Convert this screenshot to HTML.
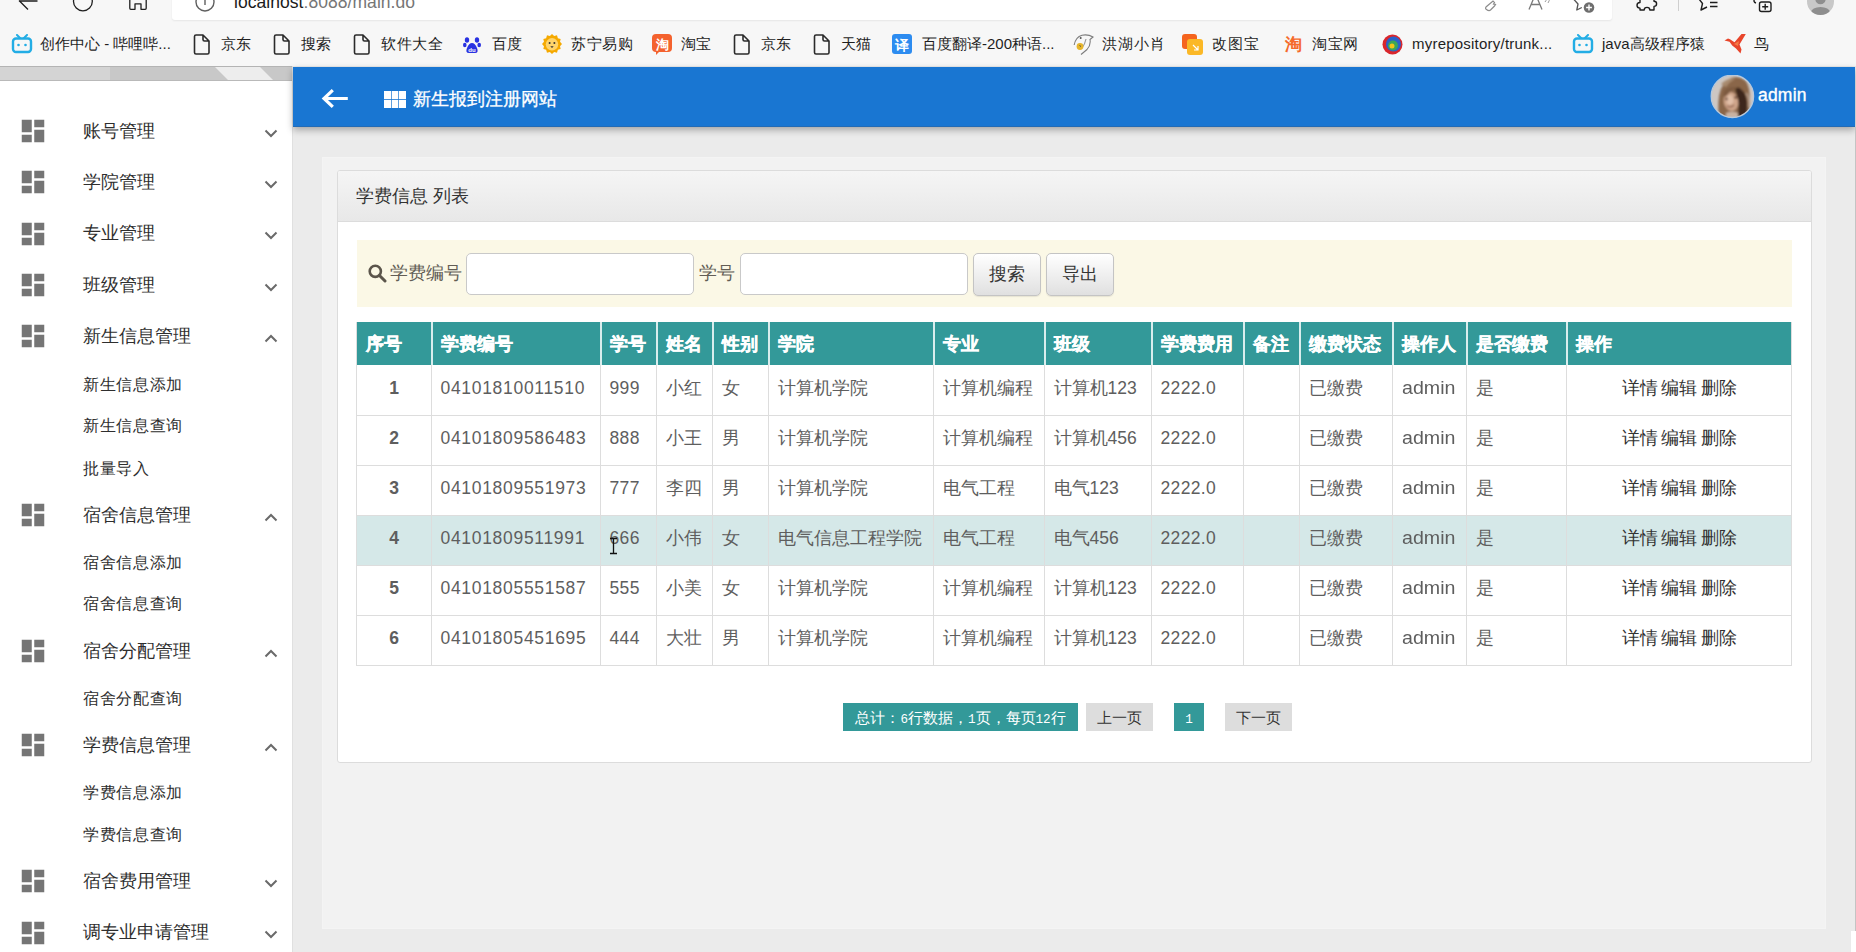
<!DOCTYPE html>
<html><head><meta charset="utf-8"><style>
*{box-sizing:border-box;margin:0;padding:0}
html,body{width:1856px;height:952px;overflow:hidden;background:#f7f7f7;font-family:"Liberation Sans",sans-serif;}
.a{position:absolute}
.t{position:absolute;white-space:nowrap;line-height:40px;height:40px}
#addr{left:172px;top:-10px;width:1440px;height:30px;background:#fff;border-radius:0 0 3px 3px;box-shadow:0 1px 2px rgba(0,0,0,.07)}
.bm{position:absolute;top:23.6px;height:40px;line-height:40px;font-size:15px;color:#1f1f1f;white-space:nowrap}
.bi{position:absolute}
#sbtop{left:0;top:66px;width:292px;height:15px;background:#c8c8c8;border-top:1px solid #b4b4b4;border-bottom:1px solid #b9b9b9;overflow:hidden}
#side{left:0;top:81px;width:292px;height:871px;background:#fff}
#sideline{left:291.5px;top:66px;width:1.5px;height:886px;background:#e0e0e0}
#main{left:293px;top:66px;width:1563px;height:886px;background:#ebebeb}
#hdr{left:293px;top:67px;width:1562px;height:60px;background:#1976d2;border-bottom:1px solid #236bb5;box-shadow:0 3px 7px rgba(0,0,0,.3)}
.mi{position:absolute;left:83px;font-size:17.5px;color:#2e2e2e;line-height:40px;height:40px;white-space:nowrap}
.si{position:absolute;left:83px;letter-spacing:0.7px;font-size:16px;color:#2e2e2e;line-height:40px;height:40px;white-space:nowrap}
.ic{position:absolute;left:22px;width:22px;height:22px}
.chev{position:absolute;left:264px;width:14px;height:9px}
#outer{left:322px;top:157px;width:1504px;height:772px;background:#f2f2f2;border:1px solid #f4f4f4}
#panel{left:337px;top:170px;width:1475px;height:593px;background:#fff;border:1px solid #dcdcdc;border-radius:3px;overflow:hidden}
#ph{left:0;top:0;width:1473px;height:51px;background:linear-gradient(#f5f5f5,#e8e8e8);border-bottom:1px solid #dcdcdc}
#search{left:357px;top:240px;width:1435px;height:67px;background:#fbf8e6}
.inp{position:absolute;top:253px;height:42px;width:228px;background:#fff;border:1px solid #c9c9c9;border-radius:5px}
.btn{position:absolute;top:253px;height:43px;width:68px;background:linear-gradient(#fff,#e0e0e0);border:1px solid #c4c4c4;border-radius:5px;box-shadow:0 1px 1px rgba(0,0,0,.08);font-size:17.5px;color:#333;text-align:center;line-height:41px}
.vl{position:absolute;width:1px;background:#dddddd}
.hl{position:absolute;height:1px;background:#dddddd}
.th{position:absolute;font-size:17.5px;font-weight:bold;color:#fff;-webkit-text-stroke:0.4px #fff;line-height:40px;height:40px;white-space:nowrap}
.td{position:absolute;font-size:17.5px;color:#5e5e5e;line-height:40px;height:40px;white-space:nowrap}
.mn{font-family:"Liberation Mono",monospace;font-size:12.6px}
.pg{position:absolute;top:703px;height:28px;line-height:30px;font-size:15px;text-align:center;white-space:nowrap}
</style></head><body>
<div id="addr" class="a"></div>
<svg class="a" style="left:0;top:0" width="170" height="16" fill="none" stroke="#1f1f1f" stroke-width="1.3"><path d="M37.5 1 H19 M19 0.5 L28 9.5"/><circle cx="82.9" cy="1.4" r="9.4"/><path d="M129.8 -2 V8.3 q0 1 1 1 h4.2 V3.8 h6 V9.3 h4.2 q1 0 1 -1 V-2" stroke-linejoin="round"/></svg>
<svg class="a" style="left:193px;top:-9px" width="24" height="30"><circle cx="12" cy="11" r="9" fill="none" stroke="#5f5f5f" stroke-width="1.4"/><line x1="12" y1="8" x2="12" y2="14" stroke="#5f5f5f" stroke-width="1.4"/></svg>
<div class="a" style="left:234px;top:-10px;line-height:24px;font-size:17.5px;letter-spacing:0.05px;color:#1b1b1b;white-space:nowrap">localhost<span style="color:#767676">:8088/main.do</span></div>
<svg class="a" style="left:0;top:0" width="1856" height="22" fill="none"><path d="M1486.5 9.5 q-1.5 -1 -0.5 -2.5 l7 -6 l1.5 1.5 l-1 1.5 l2 0.5 l-1 1.5 l-4 4 q-1.5 1.3 -4 -0.5z M1494 -1 q4 -4 8 -1" stroke="#8c8c8c" stroke-width="1.2"/><path d="M1529 9.5 L1535.5 -6 L1542 9.5 M1531.2 4.5 h8.6" stroke="#7a7a7a" stroke-width="1.3"/><path d="M1545 -1 q2 1.5 0 3 M1548 -2 q2.5 2.5 0 5" stroke="#9a9a9a" stroke-width="1"/><path d="M1573.5 -1 l4.5 5 l-1.2 6 l5 -2.5" stroke="#555" stroke-width="1.3" stroke-linejoin="round"/><circle cx="1589" cy="7.5" r="5.3" fill="#6e6e6e"/><path d="M1589 4.6v5.8M1586.1 7.5h5.8" stroke="#fff" stroke-width="1.4"/><path d="M1640 -1 v3.5 q-3 0 -3 2.8 q0 2.8 3 2.8 v1.9 h4.2 q0 -2.6 2.8 -2.6 q2.8 0 2.8 2.6 h4.2 v-3.6 q2.6 0 2.6 -2.6 q0 -2.6 -2.6 -2.6 v-2" stroke="#1e1e1e" stroke-width="1.4" stroke-linejoin="round"/><line x1="1678.5" y1="0" x2="1678.5" y2="11" stroke="#cfcfcf" stroke-width="1"/><path d="M1699 -1 l3.5 4.5 l-1.5 6.5 l6 -3" stroke="#1e1e1e" stroke-width="1.4" stroke-linejoin="round"/><path d="M1710 2.5h7.5M1710 6.5h7.5" stroke="#1e1e1e" stroke-width="1.4"/><path d="M1754.5 -1 q-1.5 3 1.5 4" stroke="#1e1e1e" stroke-width="1.4"/><rect x="1759.5" y="2" width="11.5" height="9.5" rx="2" stroke="#1e1e1e" stroke-width="1.4"/><path d="M1765.2 3.8v6M1762.2 6.8h6" stroke="#1e1e1e" stroke-width="1.4"/></svg>
<svg class="a" style="left:1806px;top:0" width="30" height="18"><defs><clipPath id="pc"><circle cx="14.5" cy="1.5" r="13.5"/></clipPath></defs><circle cx="14.5" cy="1.5" r="13.5" fill="#c8c8c8"/><g clip-path="url(#pc)" fill="#8e8e8e"><circle cx="14.5" cy="-1" r="5.2"/><ellipse cx="14.5" cy="12.5" rx="9.5" ry="5.5"/></g></svg>
<svg class="bi" style="left:11px;top:34px" width="22" height="20"><path d="M6 1 l3 3 M16 1 l-3 3" stroke="#23ade5" stroke-width="2" stroke-linecap="round"/><rect x="2" y="4.5" width="18" height="13.5" rx="3" fill="none" stroke="#23ade5" stroke-width="2.4"/><circle cx="7.5" cy="11" r="1.3" fill="#23ade5"/><circle cx="14.5" cy="11" r="1.3" fill="#23ade5"/></svg>
<div class="bm" style="left:40px;letter-spacing:0.00px">创作中心 - 哔哩哔...</div>
<svg class="bi" style="left:193px;top:34px" width="18" height="21" fill="none" stroke="#2b2b2b" stroke-width="1.6" stroke-linejoin="round"><path d="M1.5 2.5 q0 -1.5 1.5 -1.5 h7 l6 6 v11.5 q0 1.5 -1.5 1.5 h-11.5 q-1.5 0 -1.5 -1.5z M10 1 v4.5 q0 1.5 1.5 1.5 h4.5"/></svg>
<div class="bm" style="left:221px;letter-spacing:0.00px">京东</div>
<svg class="bi" style="left:273px;top:34px" width="18" height="21" fill="none" stroke="#2b2b2b" stroke-width="1.6" stroke-linejoin="round"><path d="M1.5 2.5 q0 -1.5 1.5 -1.5 h7 l6 6 v11.5 q0 1.5 -1.5 1.5 h-11.5 q-1.5 0 -1.5 -1.5z M10 1 v4.5 q0 1.5 1.5 1.5 h4.5"/></svg>
<div class="bm" style="left:301px;letter-spacing:0.00px">搜索</div>
<svg class="bi" style="left:353px;top:34px" width="18" height="21" fill="none" stroke="#2b2b2b" stroke-width="1.6" stroke-linejoin="round"><path d="M1.5 2.5 q0 -1.5 1.5 -1.5 h7 l6 6 v11.5 q0 1.5 -1.5 1.5 h-11.5 q-1.5 0 -1.5 -1.5z M10 1 v4.5 q0 1.5 1.5 1.5 h4.5"/></svg>
<div class="bm" style="left:381px;letter-spacing:0.60px">软件大全</div>
<svg class="bi" style="left:463px;top:34px" width="18" height="20" fill="#2932e1"><ellipse cx="4" cy="6" rx="2.2" ry="2.8"/><ellipse cx="14" cy="6" rx="2.2" ry="2.8"/><ellipse cx="1.8" cy="11" rx="1.8" ry="2.3"/><ellipse cx="16.2" cy="11" rx="1.8" ry="2.3"/><path d="M9 9 q3 0 5 5 q2 5 -2 5 h-6 q-4 0 -2 -5 q2 -5 5 -5z"/><text x="9" y="17.5" font-size="6" fill="#fff" text-anchor="middle" font-family="Liberation Sans" font-weight="bold">du</text></svg>
<div class="bm" style="left:492px;letter-spacing:0.00px">百度</div>
<svg class="bi" style="left:542px;top:34px" width="20" height="20"><polygon points="20.00,10.00 18.02,12.15 18.66,15.00 15.87,15.87 15.00,18.66 12.15,18.02 10.00,20.00 7.85,18.02 5.00,18.66 4.13,15.87 1.34,15.00 1.98,12.15 0.00,10.00 1.98,7.85 1.34,5.00 4.13,4.13 5.00,1.34 7.85,1.98 10.00,0.00 12.15,1.98 15.00,1.34 15.87,4.13 18.66,5.00 18.02,7.85" fill="#f5a900"/><circle cx="10" cy="10.3" r="6.2" fill="#ffd46a"/><circle cx="7.6" cy="9" r="1" fill="#333"/><circle cx="12.4" cy="9" r="1" fill="#333"/><path d="M8.3 12.3 h3.4 l-1.7 1.8z" fill="#333"/></svg>
<div class="bm" style="left:571px;letter-spacing:0.50px">苏宁易购</div>
<svg class="bi" style="left:652px;top:34px" width="20" height="21"><rect x="0" y="0" width="20" height="18" rx="4" fill="#f4622e"/><path d="M4 17 l0 4 l4 -4z" fill="#f4622e"/><text x="10" y="14.5" font-size="13" fill="#fff" text-anchor="middle" font-weight="bold">淘</text></svg>
<div class="bm" style="left:681px;letter-spacing:0.00px">淘宝</div>
<svg class="bi" style="left:733px;top:34px" width="18" height="21" fill="none" stroke="#2b2b2b" stroke-width="1.6" stroke-linejoin="round"><path d="M1.5 2.5 q0 -1.5 1.5 -1.5 h7 l6 6 v11.5 q0 1.5 -1.5 1.5 h-11.5 q-1.5 0 -1.5 -1.5z M10 1 v4.5 q0 1.5 1.5 1.5 h4.5"/></svg>
<div class="bm" style="left:761px;letter-spacing:0.00px">京东</div>
<svg class="bi" style="left:813px;top:34px" width="18" height="21" fill="none" stroke="#2b2b2b" stroke-width="1.6" stroke-linejoin="round"><path d="M1.5 2.5 q0 -1.5 1.5 -1.5 h7 l6 6 v11.5 q0 1.5 -1.5 1.5 h-11.5 q-1.5 0 -1.5 -1.5z M10 1 v4.5 q0 1.5 1.5 1.5 h4.5"/></svg>
<div class="bm" style="left:841px;letter-spacing:0.00px">天猫</div>
<svg class="bi" style="left:892px;top:34px" width="20" height="20"><rect width="20" height="20" rx="3" fill="#2d8cf0"/><text x="10" y="15.5" font-size="14" fill="#fff" text-anchor="middle" font-weight="bold">译</text></svg>
<div class="bm" style="left:922px;letter-spacing:0.00px">百度翻译-200种语...</div>
<svg class="bi" style="left:1073px;top:34px" width="22" height="22" fill="none"><path d="M1.2 11 Q2.5 3 9 1.2 Q15 0 20 3 L17 5.5 Q18 11 14 15.5 Q10.5 18.5 8 20.5" stroke="#7d7d7d" stroke-width="1.1"/><path d="M13 5 Q12 10 9 14" stroke="#9a9a9a" stroke-width="1.2"/><circle cx="7" cy="12.5" r="3.4" fill="#e6b52a"/><path d="M6.5 11.5 l1.5 1" stroke="#444" stroke-width="0.9"/><circle cx="7.7" cy="4" r="1" fill="#555"/></svg>
<div class="bm" style="left:1102px;letter-spacing:1.00px">洪湖小肖</div>
<svg class="bi" style="left:1182px;top:34px" width="21" height="21"><rect x="0" y="0" width="15" height="15" rx="3" fill="#f5641e"/><rect x="5" y="5" width="16" height="16" rx="3" fill="#fbb826"/><path d="M11 11 l5 5 M16 12 v4 h-4" stroke="#fff" stroke-width="1.2" fill="none"/></svg>
<div class="bm" style="left:1212px;letter-spacing:0.80px">改图宝</div>
<svg class="bi" style="left:1283px;top:34px" width="20" height="20"><text x="10" y="16" font-size="17" fill="#f56a2a" text-anchor="middle" font-weight="bold">淘</text></svg>
<div class="bm" style="left:1312px;letter-spacing:0.70px">淘宝网</div>
<svg class="bi" style="left:1382px;top:34px" width="21" height="21"><circle cx="10.5" cy="10.5" r="10" fill="#d9262c"/><circle cx="11.5" cy="10" r="7.5" fill="#2a62c9"/><circle cx="11" cy="11.5" r="5" fill="#3aa757"/><circle cx="10" cy="12" r="2.5" fill="#f0c419"/></svg>
<div class="bm" style="left:1412px;letter-spacing:0.22px">myrepository/trunk...</div>
<svg class="bi" style="left:1572px;top:34px" width="22" height="20"><path d="M6 1 l3 3 M16 1 l-3 3" stroke="#23ade5" stroke-width="2" stroke-linecap="round"/><rect x="2" y="4.5" width="18" height="13.5" rx="3" fill="none" stroke="#23ade5" stroke-width="2.4"/><circle cx="7.5" cy="11" r="1.3" fill="#23ade5"/><circle cx="14.5" cy="11" r="1.3" fill="#23ade5"/></svg>
<div class="bm" style="left:1602px;letter-spacing:0.00px">java高级程序猿</div>
<svg class="bi" style="left:1720px;top:30px" width="26" height="26"><path d="M4.5 10.5 L8 8.6 L10 9.2 L14.5 12.2 L21.5 4 L25.8 4 L19.5 14.5 L21.5 19.5 L20.5 23.5 L16 18.5 L12.2 15.5 L9.5 11.8 Z" fill="#e8452b"/><path d="M14 14 L19 11 L18 16z" fill="#f47a45"/></svg>
<div class="bm" style="left:1754px;letter-spacing:0.00px">鸟</div>
<div id="main" class="a"></div>
<div id="sbtop" class="a"><div class="a" style="left:0;top:0;width:110px;height:13px;background:#d4d4d4"></div><div class="a" style="left:215px;top:0;width:45px;height:13px;background:#ededed;transform:skewX(45deg);transform-origin:0 0"></div></div>
<div id="side" class="a"></div>
<div id="sideline" class="a"></div>
<div id="hdr" class="a"></div>
<div class="a" style="left:1855px;top:127px;width:1px;height:804px;background:#c4c4c4"></div><div class="a" style="left:1851px;top:931px;width:5px;height:21px;background:#fff"></div>
<svg class="a" style="left:18.3px;top:116.0px" width="30" height="30" viewBox="0 0 24 24" fill="#757575"><path d="M3 13h8V3H3v10zm0 8h8v-6H3v6zm10 0h8V11h-8v10zm0-18v6h8V3h-8z"/></svg>
<div class="mi" style="top:110.8px">账号管理</div>
<svg class="a" style="left:264px;top:128.8px" width="14" height="9" fill="none" stroke="#6a6a6a" stroke-width="2"><path d="M1.5 1.5 l5.5 5.5 l5.5 -5.5"/></svg>
<svg class="a" style="left:18.3px;top:167.3px" width="30" height="30" viewBox="0 0 24 24" fill="#757575"><path d="M3 13h8V3H3v10zm0 8h8v-6H3v6zm10 0h8V11h-8v10zm0-18v6h8V3h-8z"/></svg>
<div class="mi" style="top:162.1px">学院管理</div>
<svg class="a" style="left:264px;top:180.1px" width="14" height="9" fill="none" stroke="#6a6a6a" stroke-width="2"><path d="M1.5 1.5 l5.5 5.5 l5.5 -5.5"/></svg>
<svg class="a" style="left:18.3px;top:218.5px" width="30" height="30" viewBox="0 0 24 24" fill="#757575"><path d="M3 13h8V3H3v10zm0 8h8v-6H3v6zm10 0h8V11h-8v10zm0-18v6h8V3h-8z"/></svg>
<div class="mi" style="top:213.3px">专业管理</div>
<svg class="a" style="left:264px;top:231.3px" width="14" height="9" fill="none" stroke="#6a6a6a" stroke-width="2"><path d="M1.5 1.5 l5.5 5.5 l5.5 -5.5"/></svg>
<svg class="a" style="left:18.3px;top:269.8px" width="30" height="30" viewBox="0 0 24 24" fill="#757575"><path d="M3 13h8V3H3v10zm0 8h8v-6H3v6zm10 0h8V11h-8v10zm0-18v6h8V3h-8z"/></svg>
<div class="mi" style="top:264.6px">班级管理</div>
<svg class="a" style="left:264px;top:282.6px" width="14" height="9" fill="none" stroke="#6a6a6a" stroke-width="2"><path d="M1.5 1.5 l5.5 5.5 l5.5 -5.5"/></svg>
<svg class="a" style="left:18.3px;top:321.0px" width="30" height="30" viewBox="0 0 24 24" fill="#757575"><path d="M3 13h8V3H3v10zm0 8h8v-6H3v6zm10 0h8V11h-8v10zm0-18v6h8V3h-8z"/></svg>
<div class="mi" style="top:315.8px">新生信息管理</div>
<svg class="a" style="left:264px;top:334.2px" width="14" height="9" fill="none" stroke="#6a6a6a" stroke-width="2"><path d="M1.5 7.5 l5.5 -5.5 l5.5 5.5"/></svg>
<svg class="a" style="left:18.3px;top:500.0px" width="30" height="30" viewBox="0 0 24 24" fill="#757575"><path d="M3 13h8V3H3v10zm0 8h8v-6H3v6zm10 0h8V11h-8v10zm0-18v6h8V3h-8z"/></svg>
<div class="mi" style="top:494.8px">宿舍信息管理</div>
<svg class="a" style="left:264px;top:513.2px" width="14" height="9" fill="none" stroke="#6a6a6a" stroke-width="2"><path d="M1.5 7.5 l5.5 -5.5 l5.5 5.5"/></svg>
<svg class="a" style="left:18.3px;top:636.0px" width="30" height="30" viewBox="0 0 24 24" fill="#757575"><path d="M3 13h8V3H3v10zm0 8h8v-6H3v6zm10 0h8V11h-8v10zm0-18v6h8V3h-8z"/></svg>
<div class="mi" style="top:630.8px">宿舍分配管理</div>
<svg class="a" style="left:264px;top:649.2px" width="14" height="9" fill="none" stroke="#6a6a6a" stroke-width="2"><path d="M1.5 7.5 l5.5 -5.5 l5.5 5.5"/></svg>
<svg class="a" style="left:18.3px;top:730.0px" width="30" height="30" viewBox="0 0 24 24" fill="#757575"><path d="M3 13h8V3H3v10zm0 8h8v-6H3v6zm10 0h8V11h-8v10zm0-18v6h8V3h-8z"/></svg>
<div class="mi" style="top:724.8px">学费信息管理</div>
<svg class="a" style="left:264px;top:743.2px" width="14" height="9" fill="none" stroke="#6a6a6a" stroke-width="2"><path d="M1.5 7.5 l5.5 -5.5 l5.5 5.5"/></svg>
<svg class="a" style="left:18.3px;top:866.0px" width="30" height="30" viewBox="0 0 24 24" fill="#757575"><path d="M3 13h8V3H3v10zm0 8h8v-6H3v6zm10 0h8V11h-8v10zm0-18v6h8V3h-8z"/></svg>
<div class="mi" style="top:860.8px">宿舍费用管理</div>
<svg class="a" style="left:264px;top:878.8px" width="14" height="9" fill="none" stroke="#6a6a6a" stroke-width="2"><path d="M1.5 1.5 l5.5 5.5 l5.5 -5.5"/></svg>
<svg class="a" style="left:18.3px;top:917.5px" width="30" height="30" viewBox="0 0 24 24" fill="#757575"><path d="M3 13h8V3H3v10zm0 8h8v-6H3v6zm10 0h8V11h-8v10zm0-18v6h8V3h-8z"/></svg>
<div class="mi" style="top:912.3px">调专业申请管理</div>
<svg class="a" style="left:264px;top:930.3px" width="14" height="9" fill="none" stroke="#6a6a6a" stroke-width="2"><path d="M1.5 1.5 l5.5 5.5 l5.5 -5.5"/></svg>
<div class="si" style="top:364.5px">新生信息添加</div>
<div class="si" style="top:406.2px">新生信息查询</div>
<div class="si" style="top:448.5px">批量导入</div>
<div class="si" style="top:542.5px">宿舍信息添加</div>
<div class="si" style="top:584.0px">宿舍信息查询</div>
<div class="si" style="top:678.5px">宿舍分配查询</div>
<div class="si" style="top:772.5px">学费信息添加</div>
<div class="si" style="top:814.5px">学费信息查询</div>
<svg class="a" style="left:318px;top:87px" width="32" height="23" fill="none" stroke="#fff" stroke-width="3.2"><path d="M14.8 3.2 l-8.8 8.3 l8.8 8.3 M5.5 11.5 h24.3"/></svg>
<svg class="a" style="left:384px;top:91px" width="22" height="17" fill="#fff"><rect x="0" y="0" width="7" height="8"/><rect x="7.7" y="0" width="6.6" height="8"/><rect x="15" y="0" width="7" height="8"/><rect x="0" y="8.8" width="7" height="8.2"/><rect x="7.7" y="8.8" width="6.6" height="8.2"/><rect x="15" y="8.8" width="7" height="8.2"/></svg>
<div class="t" style="left:413px;top:78.6px;font-size:17.7px;color:#fff;-webkit-text-stroke:0.3px #fff">新生报到注册网站</div>
<svg class="a" style="left:1710px;top:75px" width="45" height="44"><defs><clipPath id="cp"><circle cx="22.4" cy="21.3" r="21.2"/></clipPath><filter id="bl" x="-20%" y="-20%" width="140%" height="140%"><feGaussianBlur stdDeviation="1.1"/></filter></defs><g clip-path="url(#cp)"><rect width="45" height="44" fill="#cdc7c3"/><g filter="url(#bl)"><path d="M9 44 q-2 -20 2 -30 q5 -12 16 -12 q10 1 12 12 q2 12 -1 30z" fill="#8a6649"/><path d="M11 9 q6 -6 14 -5 q-6 3 -9 8z" fill="#a88a6e"/><path d="M28 12 q8 4 9 14 q1 10 -2 18 h-8 q4 -14 -2 -30z" fill="#3e281b"/><path d="M36 18 q4 5 3 14" stroke="#b49a88" stroke-width="2" fill="none"/><ellipse cx="21" cy="26.5" rx="7.2" ry="9.5" fill="#cfa58a" transform="rotate(-12 21 26.5)"/><ellipse cx="20" cy="25" rx="3.5" ry="5" fill="#e2bfa8"/><path d="M14 16 q7 -6 15 -3 q-7 1 -10 5 q-3 4 -6 4z" fill="#7d5a40"/><circle cx="16.5" cy="24" r="1.3" fill="#5a3a2c"/><circle cx="25.5" cy="22.5" r="1.3" fill="#5a3a2c"/><path d="M17 31 q4 2 7 -1" stroke="#8a5a48" stroke-width="1.2" fill="none"/><path d="M16 38 q6 -3 12 0 v7 h-12z" fill="#c9b2a2"/></g></g><circle cx="22.4" cy="21.3" r="21.2" fill="none" stroke="#b8c8da" stroke-width="1.3"/></svg>
<div class="t" style="left:1758px;top:75px;font-size:17.5px;color:#fff;letter-spacing:0.2px;-webkit-text-stroke:0.35px #fff">admin</div>
<div id="outer" class="a"></div>
<div id="panel" class="a"><div id="ph" class="a"></div></div>
<div class="t" style="left:356px;top:175.5px;font-size:17.5px;color:#333">学费信息 列表</div>
<div id="search" class="a"></div>
<svg class="a" style="left:368px;top:264px" width="19" height="19" fill="none" stroke="#5b554b" stroke-width="2.6"><circle cx="7.3" cy="7.3" r="5.6"/><path d="M11.5 11.5 l5.5 5.5" stroke-linecap="round" stroke-width="3"/></svg>
<div class="t" style="left:390px;top:253px;font-size:17.5px;color:#625d55">学费编号</div>
<div class="t" style="left:699px;top:253px;font-size:17.5px;color:#625d55">学号</div>
<div class="inp" style="left:466px"></div>
<div class="inp" style="left:740px"></div>
<div class="btn" style="left:973px">搜索</div>
<div class="btn" style="left:1046px">导出</div>
<div class="a" style="left:357px;top:322px;width:1434px;height:43px;background:#339999"></div>
<div class="a" style="left:357px;top:515px;width:1434px;height:50px;background:#d5e8e8"></div>
<div class="vl" style="left:356px;top:322px;height:344px"></div>
<div class="vl" style="left:431px;top:322px;height:344px"></div>
<div class="vl" style="left:600px;top:322px;height:344px"></div>
<div class="vl" style="left:656px;top:322px;height:344px"></div>
<div class="vl" style="left:712px;top:322px;height:344px"></div>
<div class="vl" style="left:768px;top:322px;height:344px"></div>
<div class="vl" style="left:933px;top:322px;height:344px"></div>
<div class="vl" style="left:1044px;top:322px;height:344px"></div>
<div class="vl" style="left:1151px;top:322px;height:344px"></div>
<div class="vl" style="left:1243px;top:322px;height:344px"></div>
<div class="vl" style="left:1299px;top:322px;height:344px"></div>
<div class="vl" style="left:1392px;top:322px;height:344px"></div>
<div class="vl" style="left:1466px;top:322px;height:344px"></div>
<div class="vl" style="left:1566px;top:322px;height:344px"></div>
<div class="vl" style="left:1791px;top:322px;height:344px"></div>
<div class="a" style="left:431px;top:322px;width:2px;height:43px;background:#d9eded"></div>
<div class="a" style="left:600px;top:322px;width:2px;height:43px;background:#d9eded"></div>
<div class="a" style="left:656px;top:322px;width:2px;height:43px;background:#d9eded"></div>
<div class="a" style="left:712px;top:322px;width:2px;height:43px;background:#d9eded"></div>
<div class="a" style="left:768px;top:322px;width:2px;height:43px;background:#d9eded"></div>
<div class="a" style="left:933px;top:322px;width:2px;height:43px;background:#d9eded"></div>
<div class="a" style="left:1044px;top:322px;width:2px;height:43px;background:#d9eded"></div>
<div class="a" style="left:1151px;top:322px;width:2px;height:43px;background:#d9eded"></div>
<div class="a" style="left:1243px;top:322px;width:2px;height:43px;background:#d9eded"></div>
<div class="a" style="left:1299px;top:322px;width:2px;height:43px;background:#d9eded"></div>
<div class="a" style="left:1392px;top:322px;width:2px;height:43px;background:#d9eded"></div>
<div class="a" style="left:1466px;top:322px;width:2px;height:43px;background:#d9eded"></div>
<div class="a" style="left:1566px;top:322px;width:2px;height:43px;background:#d9eded"></div>
<div class="hl" style="left:356px;top:415px;width:1436px"></div>
<div class="hl" style="left:356px;top:465px;width:1436px"></div>
<div class="hl" style="left:356px;top:515px;width:1436px"></div>
<div class="hl" style="left:356px;top:565px;width:1436px"></div>
<div class="hl" style="left:356px;top:615px;width:1436px"></div>
<div class="hl" style="left:356px;top:665px;width:1436px"></div>
<div class="th" style="left:365.5px;top:323.7px">序号</div>
<div class="th" style="left:441.0px;top:323.7px">学费编号</div>
<div class="th" style="left:610.0px;top:323.7px">学号</div>
<div class="th" style="left:666.0px;top:323.7px">姓名</div>
<div class="th" style="left:722.0px;top:323.7px">性别</div>
<div class="th" style="left:778.0px;top:323.7px">学院</div>
<div class="th" style="left:943.0px;top:323.7px">专业</div>
<div class="th" style="left:1054.0px;top:323.7px">班级</div>
<div class="th" style="left:1161.0px;top:323.7px">学费费用</div>
<div class="th" style="left:1253.0px;top:323.7px">备注</div>
<div class="th" style="left:1309.0px;top:323.7px">缴费状态</div>
<div class="th" style="left:1402.0px;top:323.7px">操作人</div>
<div class="th" style="left:1476.0px;top:323.7px">是否缴费</div>
<div class="th" style="left:1576.0px;top:323.7px">操作</div>
<div class="td" style="left:357px;width:74px;text-align:center;font-weight:bold;top:368.4px">1</div>
<div class="td" style="left:440.5px;top:368.4px;letter-spacing:0.69px">04101810011510</div>
<div class="td" style="left:609.5px;top:368.4px;letter-spacing:0.35px">999</div>
<div class="td" style="left:665.5px;top:368.4px">小红</div>
<div class="td" style="left:721.5px;top:368.4px">女</div>
<div class="td" style="left:777.5px;top:368.4px">计算机学院</div>
<div class="td" style="left:942.5px;top:368.4px">计算机编程</div>
<div class="td" style="left:1053.5px;top:368.4px">计算机123</div>
<div class="td" style="left:1160.5px;top:368.4px;letter-spacing:0.35px">2222.0</div>
<div class="td" style="left:1308.5px;top:368.4px">已缴费</div>
<div class="td" style="left:1401.5px;top:368.4px;transform:scaleX(1.12);transform-origin:0 0">admin</div>
<div class="td" style="left:1475.5px;top:368.4px">是</div>
<div class="td" style="left:1566px;width:225px;text-align:center;color:#333;word-spacing:-1px;padding-left:2px;top:368.4px">详情 编辑 删除</div>
<div class="td" style="left:357px;width:74px;text-align:center;font-weight:bold;top:418.4px">2</div>
<div class="td" style="left:440.5px;top:418.4px;letter-spacing:0.69px">04101809586483</div>
<div class="td" style="left:609.5px;top:418.4px;letter-spacing:0.35px">888</div>
<div class="td" style="left:665.5px;top:418.4px">小王</div>
<div class="td" style="left:721.5px;top:418.4px">男</div>
<div class="td" style="left:777.5px;top:418.4px">计算机学院</div>
<div class="td" style="left:942.5px;top:418.4px">计算机编程</div>
<div class="td" style="left:1053.5px;top:418.4px">计算机456</div>
<div class="td" style="left:1160.5px;top:418.4px;letter-spacing:0.35px">2222.0</div>
<div class="td" style="left:1308.5px;top:418.4px">已缴费</div>
<div class="td" style="left:1401.5px;top:418.4px;transform:scaleX(1.12);transform-origin:0 0">admin</div>
<div class="td" style="left:1475.5px;top:418.4px">是</div>
<div class="td" style="left:1566px;width:225px;text-align:center;color:#333;word-spacing:-1px;padding-left:2px;top:418.4px">详情 编辑 删除</div>
<div class="td" style="left:357px;width:74px;text-align:center;font-weight:bold;top:468.4px">3</div>
<div class="td" style="left:440.5px;top:468.4px;letter-spacing:0.69px">04101809551973</div>
<div class="td" style="left:609.5px;top:468.4px;letter-spacing:0.35px">777</div>
<div class="td" style="left:665.5px;top:468.4px">李四</div>
<div class="td" style="left:721.5px;top:468.4px">男</div>
<div class="td" style="left:777.5px;top:468.4px">计算机学院</div>
<div class="td" style="left:942.5px;top:468.4px">电气工程</div>
<div class="td" style="left:1053.5px;top:468.4px">电气123</div>
<div class="td" style="left:1160.5px;top:468.4px;letter-spacing:0.35px">2222.0</div>
<div class="td" style="left:1308.5px;top:468.4px">已缴费</div>
<div class="td" style="left:1401.5px;top:468.4px;transform:scaleX(1.12);transform-origin:0 0">admin</div>
<div class="td" style="left:1475.5px;top:468.4px">是</div>
<div class="td" style="left:1566px;width:225px;text-align:center;color:#333;word-spacing:-1px;padding-left:2px;top:468.4px">详情 编辑 删除</div>
<div class="td" style="left:357px;width:74px;text-align:center;font-weight:bold;top:518.4px">4</div>
<div class="td" style="left:440.5px;top:518.4px;letter-spacing:0.69px">04101809511991</div>
<div class="td" style="left:609.5px;top:518.4px;letter-spacing:0.35px">666</div>
<div class="td" style="left:665.5px;top:518.4px">小伟</div>
<div class="td" style="left:721.5px;top:518.4px">女</div>
<div class="td" style="left:777.5px;top:518.4px">电气信息工程学院</div>
<div class="td" style="left:942.5px;top:518.4px">电气工程</div>
<div class="td" style="left:1053.5px;top:518.4px">电气456</div>
<div class="td" style="left:1160.5px;top:518.4px;letter-spacing:0.35px">2222.0</div>
<div class="td" style="left:1308.5px;top:518.4px">已缴费</div>
<div class="td" style="left:1401.5px;top:518.4px;transform:scaleX(1.12);transform-origin:0 0">admin</div>
<div class="td" style="left:1475.5px;top:518.4px">是</div>
<div class="td" style="left:1566px;width:225px;text-align:center;color:#333;word-spacing:-1px;padding-left:2px;top:518.4px">详情 编辑 删除</div>
<div class="td" style="left:357px;width:74px;text-align:center;font-weight:bold;top:568.4px">5</div>
<div class="td" style="left:440.5px;top:568.4px;letter-spacing:0.69px">04101805551587</div>
<div class="td" style="left:609.5px;top:568.4px;letter-spacing:0.35px">555</div>
<div class="td" style="left:665.5px;top:568.4px">小美</div>
<div class="td" style="left:721.5px;top:568.4px">女</div>
<div class="td" style="left:777.5px;top:568.4px">计算机学院</div>
<div class="td" style="left:942.5px;top:568.4px">计算机编程</div>
<div class="td" style="left:1053.5px;top:568.4px">计算机123</div>
<div class="td" style="left:1160.5px;top:568.4px;letter-spacing:0.35px">2222.0</div>
<div class="td" style="left:1308.5px;top:568.4px">已缴费</div>
<div class="td" style="left:1401.5px;top:568.4px;transform:scaleX(1.12);transform-origin:0 0">admin</div>
<div class="td" style="left:1475.5px;top:568.4px">是</div>
<div class="td" style="left:1566px;width:225px;text-align:center;color:#333;word-spacing:-1px;padding-left:2px;top:568.4px">详情 编辑 删除</div>
<div class="td" style="left:357px;width:74px;text-align:center;font-weight:bold;top:618.4px">6</div>
<div class="td" style="left:440.5px;top:618.4px;letter-spacing:0.69px">04101805451695</div>
<div class="td" style="left:609.5px;top:618.4px;letter-spacing:0.35px">444</div>
<div class="td" style="left:665.5px;top:618.4px">大壮</div>
<div class="td" style="left:721.5px;top:618.4px">男</div>
<div class="td" style="left:777.5px;top:618.4px">计算机学院</div>
<div class="td" style="left:942.5px;top:618.4px">计算机编程</div>
<div class="td" style="left:1053.5px;top:618.4px">计算机123</div>
<div class="td" style="left:1160.5px;top:618.4px;letter-spacing:0.35px">2222.0</div>
<div class="td" style="left:1308.5px;top:618.4px">已缴费</div>
<div class="td" style="left:1401.5px;top:618.4px;transform:scaleX(1.12);transform-origin:0 0">admin</div>
<div class="td" style="left:1475.5px;top:618.4px">是</div>
<div class="td" style="left:1566px;width:225px;text-align:center;color:#333;word-spacing:-1px;padding-left:2px;top:618.4px">详情 编辑 删除</div>
<svg class="a" style="left:609px;top:537px" width="9" height="18" stroke="#111" stroke-width="1.3" fill="none"><path d="M1 1.5h7M4.5 1.5v15M1 16.5h7"/></svg>
<div class="pg" style="left:843px;width:235px;background:#339999;color:#fff">总计：<span class="mn">6</span>行数据，<span class="mn">1</span>页，每页<span class="mn">12</span>行</div>
<div class="pg" style="left:1086px;width:67px;background:#dddddd;color:#333">上一页</div>
<div class="pg" style="left:1174px;width:30px;background:#339999;color:#fff"><span class="mn">1</span></div>
<div class="pg" style="left:1225px;width:67px;background:#dddddd;color:#333">下一页</div>
</body></html>
